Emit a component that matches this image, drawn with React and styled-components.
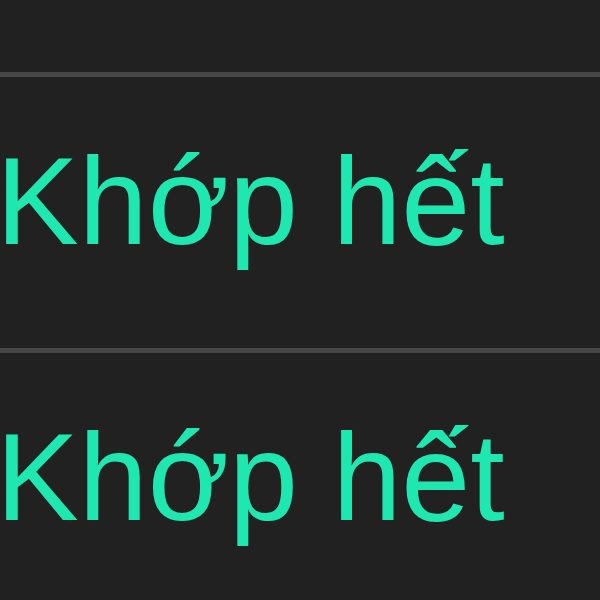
import React from "react";
import styled, { createGlobalStyle } from "styled-components";

const orders = [
  { id: 1, status: "Chặn" },
  { id: 2, status: "Khớp hết" },
  { id: 3, status: "Khớp hết" },
];

const App = () => {
  return (
    <>
      <GlobalStyle />
      <StatusList>
        {orders.map((o) => (
          <StatusRow key={o.id}>
            <StatusText>{o.status}</StatusText>
          </StatusRow>
        ))}
      </StatusList>
    </>
  );
};

export default App;

const GlobalStyle = createGlobalStyle`
  html, body {
    margin: 0;
    padding: 0;
    background: #212121;
    overflow: hidden;
  }
`;

// list starts scrolled, the first row is mostly above the top edge
const StatusList = styled.div`
  display: flex;
  flex-direction: column;
  margin-top: -199px;
  width: 100%;
`;

const StatusRow = styled.div`
  box-sizing: border-box;
  height: 276px;
  flex-shrink: 0;
  padding-top: 49px;
  border-bottom: 5px solid #474747;
`;

const StatusText = styled.span`
  display: block;
  margin-left: -4px;
  font-family: "Liberation Sans", Arial, sans-serif;
  font-size: 124px;
  line-height: 150px;
  color: #1ee8b0;
  white-space: nowrap;
`;
